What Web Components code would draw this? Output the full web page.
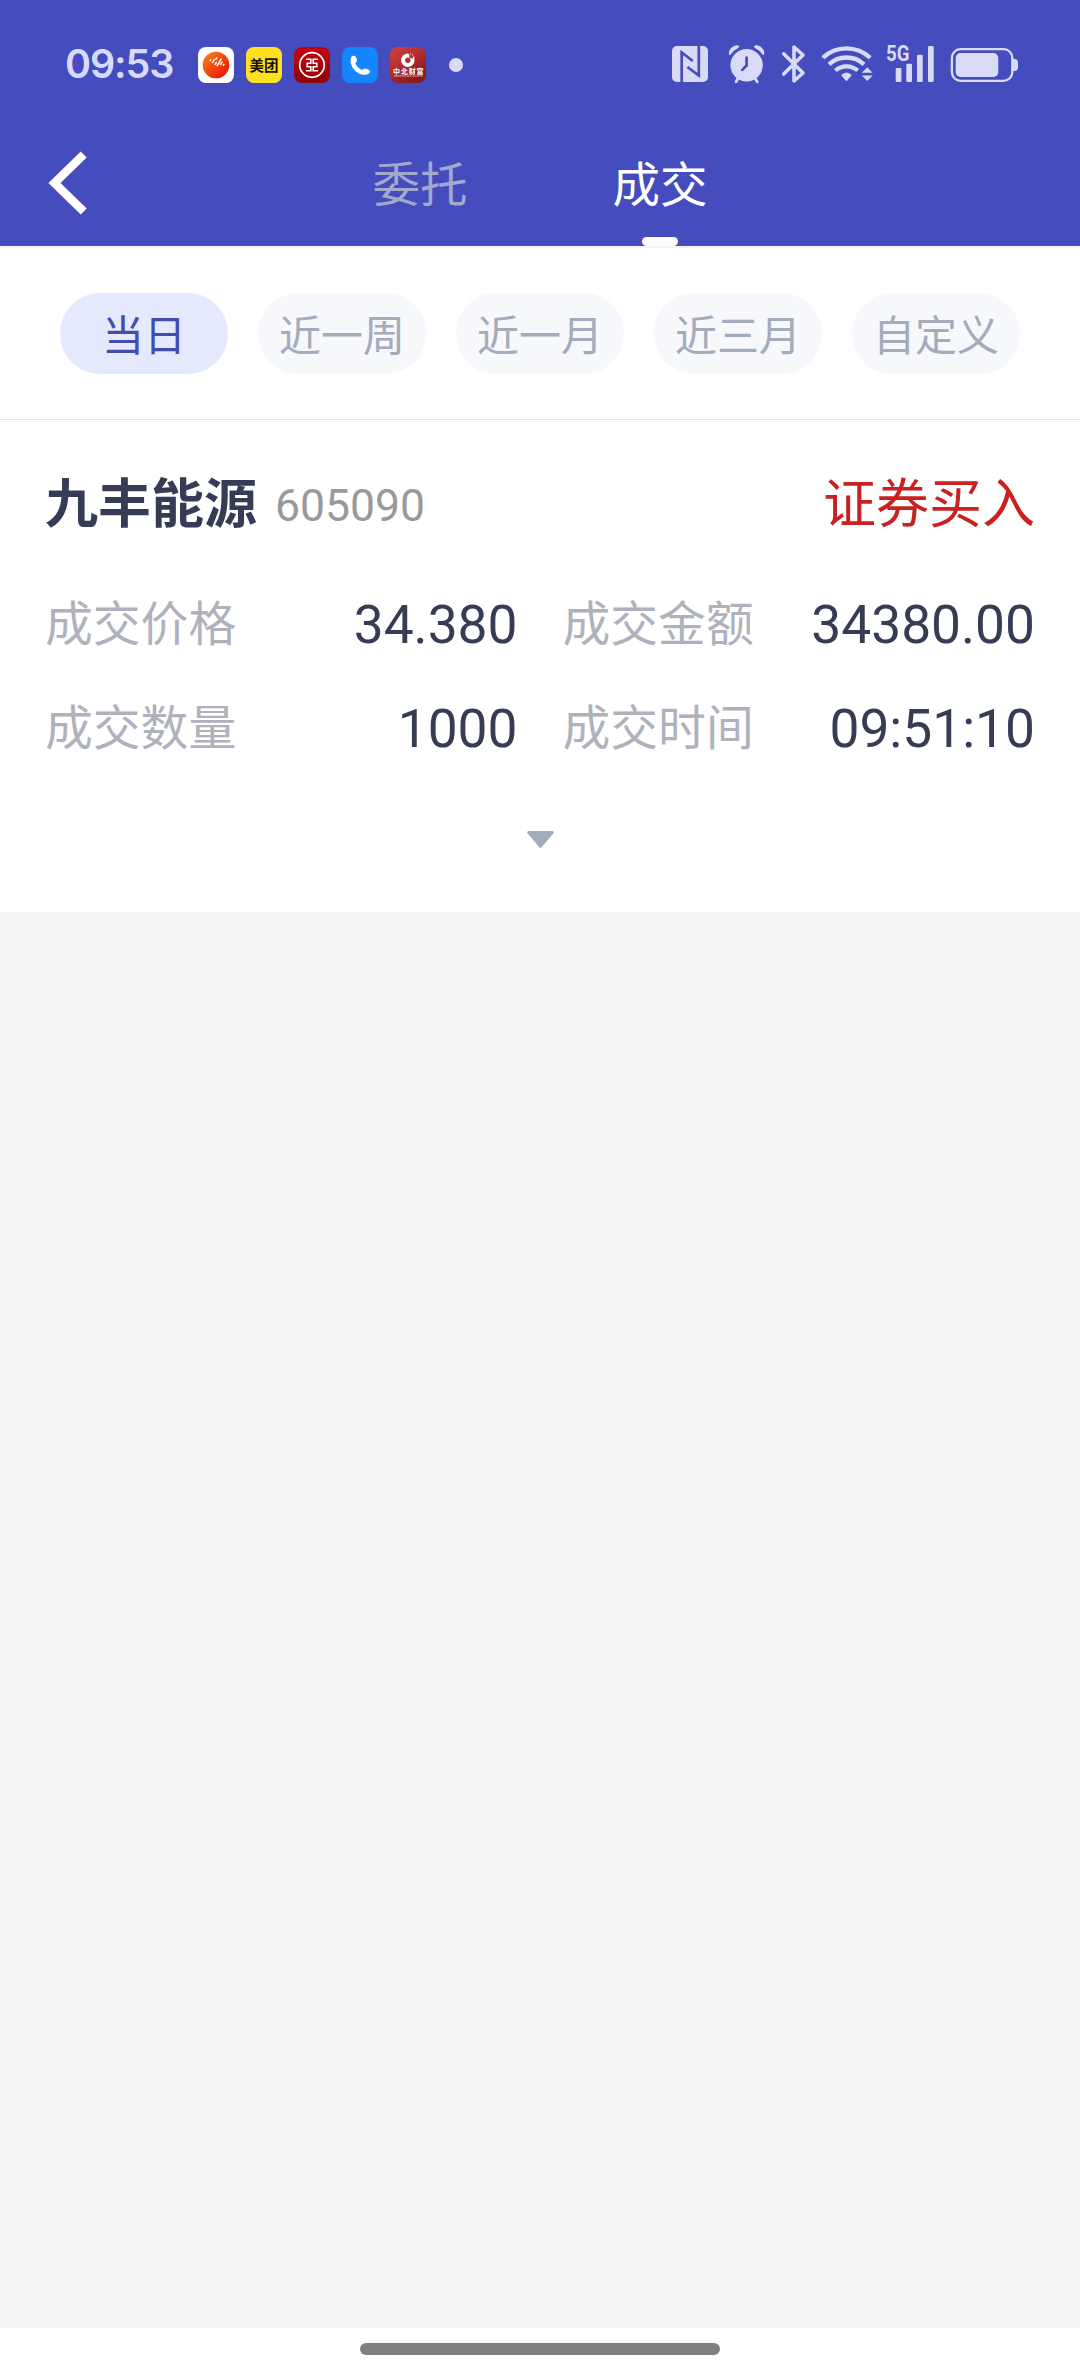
<!DOCTYPE html>
<html lang="zh-CN">
<head>
<meta charset="UTF-8">
<title>成交</title>
<style>
  html, body {
    margin: 0;
    padding: 0;
    height: 100%;
  }
  body {
    font-family: "Noto Sans CJK SC", sans-serif;
    background: #f3f4f7;
  }
</style>
</head>
<body>
<trade-app></trade-app>

<script>
class StatusBar extends HTMLElement {
  constructor() {
    super();
    this.attachShadow({ mode: 'open' });
    this.shadowRoot.innerHTML = `
      <style>
        :host {
          display: flex;
          align-items: center;
          box-sizing: border-box;
          height: 120px;
          padding: 10px 62px 0 65px;
          background: #444cbe;
          color: #d9dbf6;
        }
        .time {
          width: 133px;
          font: 600 39.5px/40px Inter, sans-serif;
          letter-spacing: -1.1px;
          color: #d8dafd;
          padding-bottom: 3px;
          box-sizing: border-box;
        }
        .apps {
          display: flex;
          gap: 12px;
        }
        .dot {
          width: 14px;
          height: 14px;
          margin-left: 23px;
          border-radius: 50%;
          background: currentColor;
        }
        .system {
          display: flex;
          align-items: center;
          margin-left: auto;
        }
        svg {
          display: block;
          flex: none;
          overflow: visible;
        }
      </style>
      <div class="time">09:53</div>
      <div class="apps">
        <svg width="36" height="36" viewBox="0 0 36 36">
          <defs><linearGradient id="sun" x1="0" y1="0" x2="1" y2="1">
            <stop offset="0" stop-color="#f58a12"/><stop offset=".55" stop-color="#f4400c"/><stop offset="1" stop-color="#e00c08"/>
          </linearGradient></defs>
          <rect width="36" height="36" rx="8" fill="#fff"/>
          <circle cx="18" cy="18" r="13.3" fill="url(#sun)"/>
          <path d="M12.300 13.400l.3-.5M14.600 15.400l1.500-2.500M17.200 17.400l1-1.700M18 12.200l.8-1.300M19.300 18.600l3.800-6.400M22.700 17.400l1.300-2.200M25.400 18.200l.4-.7" stroke="#fff" stroke-width="1.600" stroke-linecap="round"/>
        </svg>
        <svg width="36" height="36" viewBox="0 0 36 36">
          <rect width="36" height="36" rx="8" fill="#ffe021"/>
          <text x="3.600" y="23.800" font-family="Noto Sans CJK SC, sans-serif" font-weight="700" font-size="15" textLength="29" lengthAdjust="spacingAndGlyphs" fill="#15120a">美团</text>
        </svg>
        <svg width="36" height="36" viewBox="0 0 36 36">
          <defs><linearGradient id="bank" x1="0" y1="0" x2="0" y2="1">
            <stop offset="0" stop-color="#c9040e"/><stop offset="1" stop-color="#8c0208"/>
          </linearGradient></defs>
          <rect width="36" height="36" rx="8" fill="url(#bank)"/>
          <g fill="none" stroke="#fff">
            <circle cx="18" cy="18" r="12.300" stroke-width="1.700"/>
            <path d="M11.900 12.300h4.900v3.900h-3.600v3.600h3.600v3.900h-4.900M24.100 12.300h-4.900v3.900h3.600v3.600h-3.600v3.900h4.900" stroke-width="1.600"/>
          </g>
        </svg>
        <svg width="36" height="36" viewBox="0 0 36 36">
          <rect width="36" height="36" rx="8" fill="#1485fb"/>
          <path d="M9.800 9.300C11 8.200 13.200 8.600 14 10.100L15 13C15.300 14.300 14.100 15.300 13.300 16.200C14.600 19.200 17.200 21.900 20.200 23C21.100 22.100 22.100 21.200 23.400 21.600L26.700 22.700C28.300 23.500 28.200 25.200 27.200 26.300C23 29.300 17 27.500 13.200 23.800C9.200 19.800 7 13.700 9.800 9.300Z" fill="#fff"/>
        </svg>
        <svg width="36" height="36" viewBox="0 0 36 36">
          <defs><linearGradient id="wealth" x1="0" y1="0" x2=".6" y2="1">
            <stop offset="0" stop-color="#d9423e"/><stop offset="1" stop-color="#861a1c"/>
          </linearGradient></defs>
          <rect width="36" height="36" rx="8" fill="url(#wealth)"/>
          <circle cx="17.800" cy="13.200" r="4.700" fill="none" stroke="#fff" stroke-width="4"/>
          <path d="M17.600 5.500Q20.200 8 19 10.500L22.500 11.800L24 7.500Z" fill="#b93735"/>
          <path d="M20 6.500c2.300.8 3.800 2.300 4.400 4.400" fill="none" stroke="#fff" stroke-width=".8" stroke-dasharray="1.400 1"/>
          <text x="3" y="27.200" font-family="Noto Sans CJK SC, sans-serif" font-weight="700" font-size="7" textLength="30.500" lengthAdjust="spacing" fill="#fff">中北财富</text>
          <path d="M4 29h29" stroke="#f0b8b4" stroke-width="1.200" stroke-dasharray="2 .6"/>
        </svg>
      </div>
      <div class="dot"></div>
      <div class="system">
        <!-- nfc -->
        <svg width="36" height="36" viewBox="0 0 36 36" style="margin-top:-2px">
          <rect width="36" height="36" rx="5" fill="currentColor"/>
          <path d="M9.700 36V6.500L20.800 15M26.800 0V29.500L15.400 21" fill="none" stroke="#444cbe" stroke-width="2.700"/>
        </svg>
        <!-- alarm -->
        <svg width="37" height="38" viewBox="0 0 37 38" style="margin:-2px 0 0 20px">
          <circle cx="18.600" cy="20.300" r="16.200" fill="currentColor"/>
          <path d="M1.300 9.700C-.7 5 6.500-1.600 10.900.9C11.700 1.500 11 2.500 10.200 3Q5.700 5.300 2.900 9.200Q2 10.600 1.300 9.700ZM35.900 9.700C37.900 5 30.700-1.600 26.300.9C25.500 1.500 26.200 2.500 27 3Q31.500 5.300 34.300 9.200Q35.200 10.600 35.900 9.700Z" fill="currentColor"/>
          <path d="M10 33.500L8 36.700M27.200 33.500L29.200 36.700" stroke="currentColor" stroke-width="2.800" stroke-linecap="round"/>
          <path d="M18.600 12.700V20.400L14.300 24.900" fill="none" stroke="#444cbe" stroke-width="2.700" stroke-linecap="round"/>
        </svg>
        <!-- bluetooth -->
        <svg width="23" height="38" viewBox="0 0 23 38" style="margin:-2px 0 0 17px">
          <path d="M1.700 8.800L21 28L12 35.800V2L21 10L1.700 29" fill="none" stroke="currentColor" stroke-width="3.600" stroke-linejoin="round" stroke-linecap="round"/>
        </svg>
        <!-- wifi -->
        <svg width="52" height="37" viewBox="0 0 52 37" style="margin:-1px 0 0 16px">
          <g fill="none" stroke="currentColor" stroke-width="4.300">
            <path d="M1.800 11.800A34.500 34.500 0 0 1 49.200 11.800"/>
            <path d="M8 18.400A25.600 25.600 0 0 1 43 18.400"/>
            <path d="M14.300 24.500A17 17 0 0 1 36.700 24.500"/>
          </g>
          <path d="M20.200 29.200Q25.500 23.600 30.800 29.200L25.500 35.300Z" fill="currentColor"/>
          <path d="M40.800 26.700L46.200 21.200L51.600 26.700ZM40.800 29.500L46.200 35L51.600 29.500Z" fill="currentColor"/>
        </svg>
        <!-- signal -->
        <svg width="48" height="38" viewBox="0 0 48 38" style="margin:-2px 0 0 13px">
          <text x="0" y="15.900" font-family="Roboto, sans-serif" font-weight="700" font-size="21.500" textLength="23.500" lengthAdjust="spacingAndGlyphs" fill="currentColor">5G</text>
          <g fill="currentColor">
            <rect x="9.700" y="23" width="5.700" height="14" rx="1.300"/>
            <rect x="20.300" y="18.700" width="5.700" height="18.300" rx="1.300"/>
            <rect x="31" y="9.700" width="5.700" height="27.300" rx="1.300"/>
            <rect x="42" y="1" width="5.700" height="36" rx="1.300"/>
          </g>
        </svg>
        <!-- battery -->
        <svg width="68" height="34" viewBox="0 0 68 34" style="margin-left:16px">
          <rect x="1.900" y="1.200" width="60.400" height="31.600" rx="8.500" fill="none" stroke="currentColor" stroke-width="2.300"/>
          <rect x="5.700" y="5" width="42.600" height="24" rx="5" fill="currentColor"/>
          <path d="M63 11h1.500q3.500 0 3.500 3.500v5q0 3.500-3.500 3.500H63z" fill="currentColor"/>
        </svg>
      </div>
    `;
  }
}
customElements.define('status-bar', StatusBar);

class NavTab extends HTMLElement {
  constructor() {
    super();
    this.attachShadow({ mode: 'open' });
    this.shadowRoot.innerHTML = `
      <style>
        :host {
          display: flex;
          flex-direction: column;
          align-items: center;
          justify-content: space-between;
          width: 240px;
          height: 100%;
          font-size: 47.5px;
          line-height: 124px;
          color: #a2a9cc;
        }
        :host([active]) {
          color: #fff;
        }
        .label {
          height: 117px;
        }
        .line {
          display: none;
          width: 36px;
          height: 9px;
          border-radius: 4.5px;
          background: #fff;
        }
        :host([active]) .line {
          display: block;
        }
      </style>
      <div class="label"><slot></slot></div>
      <div class="line"></div>
    `;
  }
}
customElements.define('nav-tab', NavTab);

class NavBar extends HTMLElement {
  constructor() {
    super();
    this.attachShadow({ mode: 'open' });
    this.shadowRoot.innerHTML = `
      <style>
        :host {
          display: grid;
          grid-template-columns: 1fr auto 1fr;
          align-items: center;
          height: 126px;
          background: #444cbe;
          border-bottom: 2px solid #f3f4f8;
        }
        .back {
          display: block;
          margin-left: 48px;
        }
        .tabs {
          display: flex;
          height: 126px;
        }
      </style>
      <svg class="back" width="40" height="64" viewBox="0 0 40 64">
        <path d="M35.700 3.500L6.500 32L35.700 60.500" fill="none" stroke="#fff" stroke-width="8.500"/>
      </svg>
      <div class="tabs"><slot></slot></div>
    `;
  }
}
customElements.define('nav-bar', NavBar);

class RangeChip extends HTMLElement {
  constructor() {
    super();
    this.attachShadow({ mode: 'open' });
    this.shadowRoot.innerHTML = `
      <style>
        :host {
          display: block;
          flex: 1;
          height: 81px;
          border-radius: 40px;
          font-size: 42px;
          line-height: 80px;
          text-align: center;
          background: #f6f8fc;
          color: #a3abbd;
        }
        :host([active]) {
          background: #e4e9fe;
          color: #444cae;
        }
      </style>
      <slot></slot>
    `;
  }
}
customElements.define('range-chip', RangeChip);

class RangeFilter extends HTMLElement {
  constructor() {
    super();
    this.attachShadow({ mode: 'open' });
    this.shadowRoot.innerHTML = `
      <style>
        :host {
          display: flex;
          gap: 30px;
          padding: 45px 60px;
          background: #fff;
          border-bottom: 1px solid #e2e3e5;
        }
      </style>
      <slot></slot>
    `;
  }
}
customElements.define('range-filter', RangeFilter);

class TradeField extends HTMLElement {
  constructor() {
    super();
    this.attachShadow({ mode: 'open' });
    this.shadowRoot.innerHTML = `
      <style>
        :host {
          display: flex;
          justify-content: space-between;
          height: 60px;
        }
        .label {
          font-size: 47.8px;
          line-height: 54px;
          color: #afb2bd;
        }
        .value {
          font: 53.3px/63px Roboto, sans-serif;
          color: #363c54;
        }
      </style>
      <span class="label"></span>
      <span class="value"><slot></slot></span>
    `;
  }

  connectedCallback() {
    this.shadowRoot.querySelector('.label').textContent = this.getAttribute('label');
  }
}
customElements.define('trade-field', TradeField);

class TradeCard extends HTMLElement {
  constructor() {
    super();
    this.attachShadow({ mode: 'open' });
    this.shadowRoot.innerHTML = `
      <style>
        :host {
          display: block;
          padding: 50px 45px 64px;
          background: #fff;
        }
        .head {
          display: flex;
          height: 60px;
          line-height: 60px;
        }
        .name {
          font-size: 53px;
          font-weight: 700;
          color: #363c56;
        }
        .code {
          margin: 6px 0 0 18px;
          font-family: Roboto, sans-serif;
          font-size: 44.5px;
          color: #999;
        }
        .side {
          margin-left: auto;
          font-size: 53px;
          color: #c92020;
        }
        .fields {
          display: grid;
          grid-template-columns: 1fr 1fr;
          gap: 44px 45px;
          margin-top: 64px;
        }
        .more {
          display: block;
          margin: 73px auto 0;
        }
      </style>
      <div class="head">
        <span class="name"></span>
        <span class="code"></span>
        <span class="side"></span>
      </div>
      <div class="fields"><slot></slot></div>
      <svg class="more" width="27" height="17" viewBox="0 0 27 17">
        <path d="M1.500 0h24q2 .5 1 2.200L14.700 16.200q-1.200 1.300-2.400 0L.5 2.200Q-.5.5 1.500 0z" fill="#a3abbe"/>
      </svg>
    `;
  }

  connectedCallback() {
    ['name', 'code', 'side'].forEach((key) => {
      this.shadowRoot.querySelector('.' + key).textContent = this.getAttribute(key);
    });
  }
}
customElements.define('trade-card', TradeCard);

class HomeIndicator extends HTMLElement {
  constructor() {
    super();
    this.attachShadow({ mode: 'open' });
    this.shadowRoot.innerHTML = `
      <style>
        :host {
          display: block;
          box-sizing: border-box;
          height: 48px;
          padding-top: 15px;
          background: #fff;
        }
        .bar {
          width: 360px;
          height: 12px;
          margin: 0 auto;
          border-radius: 6px;
          background: #808080;
        }
      </style>
      <div class="bar"></div>
    `;
  }
}
customElements.define('home-indicator', HomeIndicator);

class TradeApp extends HTMLElement {
  constructor() {
    super();
    this.attachShadow({ mode: 'open' });
    this.shadowRoot.innerHTML = `
      <style>
        :host {
          display: flex;
          flex-direction: column;
          width: 1080px;
          height: 2376px;
          background: #f3f5f7;
        }
        home-indicator {
          margin-top: auto;
        }
      </style>
      <status-bar></status-bar>
      <nav-bar>
        <nav-tab>委托</nav-tab>
        <nav-tab active>成交</nav-tab>
      </nav-bar>
      <range-filter>
        <range-chip active>当日</range-chip>
        <range-chip>近一周</range-chip>
        <range-chip>近一月</range-chip>
        <range-chip>近三月</range-chip>
        <range-chip>自定义</range-chip>
      </range-filter>
      <trade-card name="九丰能源" code="605090" side="证券买入">
        <trade-field label="成交价格">34.380</trade-field>
        <trade-field label="成交金额">34380.00</trade-field>
        <trade-field label="成交数量">1000</trade-field>
        <trade-field label="成交时间">09:51:10</trade-field>
      </trade-card>
      <home-indicator></home-indicator>
    `;
  }
}
customElements.define('trade-app', TradeApp);
</script>
</body>
</html>
